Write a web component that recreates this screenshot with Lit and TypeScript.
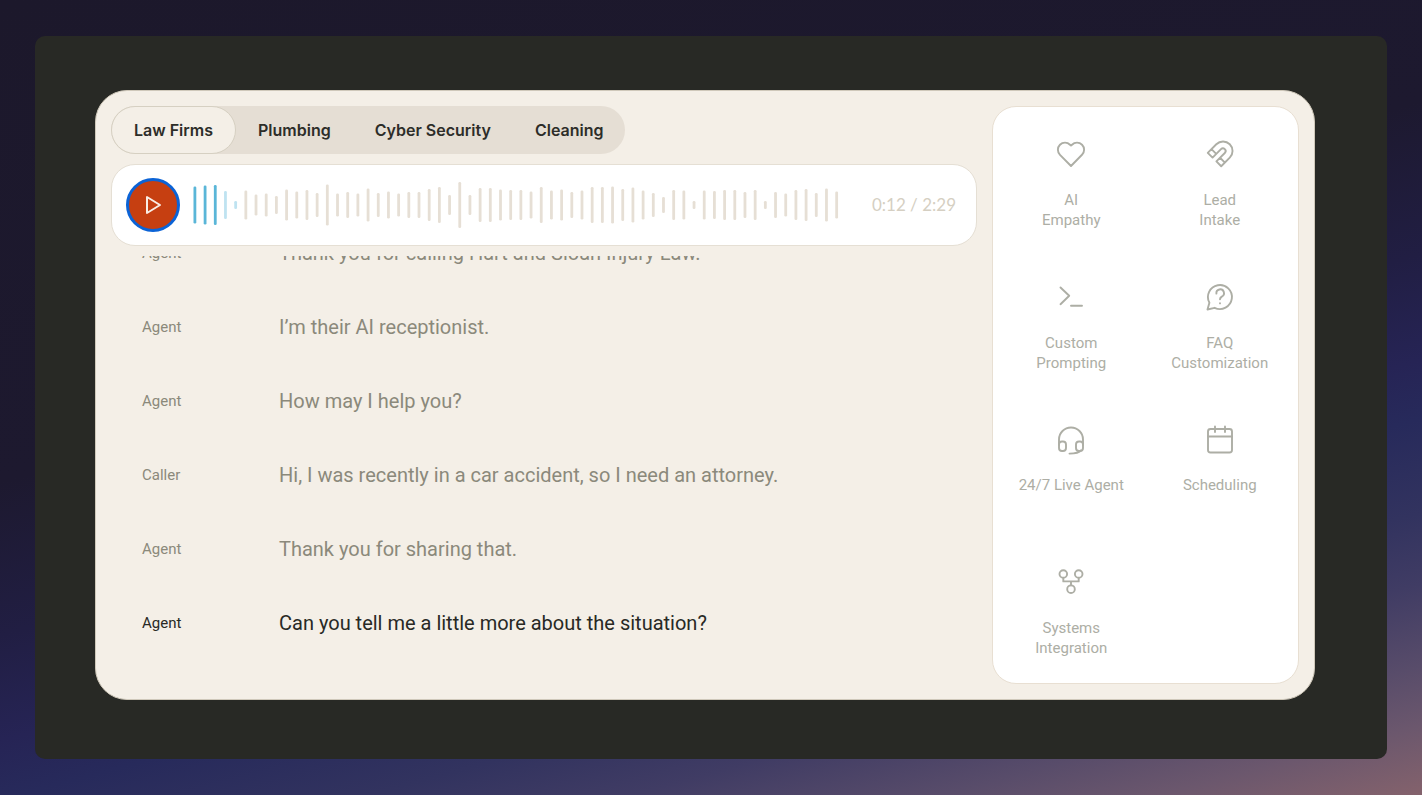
import { LitElement, html, css, svg } from "lit";
import { customElement, state } from "lit/decorators.js";
import { classMap } from "lit/directives/class-map.js";

const TABS = ["Law Firms", "Plumbing", "Cyber Security", "Cleaning"];

const LEVELS = [
  37, 39, 40, 28, 8, 29, 21, 23, 18, 31, 27, 30, 24, 41, 23, 26, 23, 33, 24, 27, 23, 26, 26, 32, 36, 20, 46, 20, 34, 34,
  31, 30, 30, 27, 36, 29, 31, 26, 29, 36, 36, 37, 32, 35, 29, 24, 16, 30, 29, 8, 29, 28, 30, 30, 26, 30, 8, 26, 23, 30,
  32, 24, 33, 27,
];

const LINES = [
  { who: "Agent", text: "Thank you for calling Hart and Sloan Injury Law." },
  { who: "Agent", text: "I’m their AI receptionist." },
  { who: "Agent", text: "How may I help you?" },
  { who: "Caller", text: "Hi, I was recently in a car accident, so I need an attorney." },
  { who: "Agent", text: "Thank you for sharing that." },
  { who: "Agent", text: "Can you tell me a little more about the situation?", current: true },
];

const FEATURES = [
  {
    label: ["AI", "Empathy"],
    icon: svg`<path d="M18 30 L7 18.8 A7.1 7.1 0 0 1 17 8.7 L18 9.6 L19 8.7 A7.1 7.1 0 0 1 29 18.8 Z"/>`,
  },
  {
    label: ["Lead", "Intake"],
    icon: svg`<g transform="rotate(45 18 18)"><path d="M8.5 25.8 V13.7 A9.5 9.5 0 0 1 27.5 13.7 V25.8 H20.7 V13.9 A2.7 2.7 0 0 0 15.3 13.9 V25.8 Z M8.5 20.6 H15.3 M20.7 20.6 H27.5"/></g>`,
  },
  {
    label: ["Custom", "Prompting"],
    icon: svg`<path d="M7.5 8.5 L16.2 16.8 L7.5 25.2 M18 26.7 H29"/>`,
  },
  {
    label: ["FAQ", "Customization"],
    icon: svg`<path d="M5.5 30.5 L7.4 23.8 A12 12 0 1 1 12.6 28.8 Z"/><path d="M14.4 14.6 A3.8 3.8 0 1 1 19.8 17.6 C18.6 18.4 18 18.9 18 20.2 M18 24.3 V24.4"/>`,
  },
  {
    label: ["24/7 Live Agent"],
    icon: svg`<path d="M6 24 V18.5 A12 12 0 0 1 30 18.5 V24"/><rect x="6" y="20.5" width="7" height="9.5" rx="3"/><rect x="23" y="20.5" width="7" height="9.5" rx="3"/><path d="M28 29.4 C26 32 23 32.6 16.5 32.6"/>`,
  },
  {
    label: ["Scheduling"],
    icon: svg`<rect x="6" y="8" width="24" height="23.5" rx="2.5"/><path d="M6 15.5 H30 M13 5.5 V11 M23 5.5 V11"/>`,
  },
  {
    label: ["Systems", "Integration"],
    icon: svg`<circle cx="10.3" cy="10" r="3.8"/><circle cx="25.7" cy="10" r="3.8"/><circle cx="18" cy="25.2" r="3.8"/><path d="M10.3 14 V17.4 H25.7 V14 M18 17.4 V21.3"/>`,
  },
];

@customElement("call-player")
export class CallPlayer extends LitElement {
  static styles = css`
    :host {
      display: flex;
      align-items: center;
      gap: 12px;
      padding: 13px 20px 13px 14px;
      background: #fff;
      border: 1px solid #e5dfd4;
      border-radius: 24px;
    }
    .play {
      flex: none;
      display: grid;
      place-items: center;
      box-sizing: border-box;
      width: 54px;
      height: 54px;
      padding: 0;
      border: 3px solid #0b63d6;
      border-radius: 50%;
      background: #c63f11;
      color: #f9ede4;
      cursor: pointer;
    }
    .wave {
      flex: 1;
      min-width: 0;
      height: 48px;
    }
    .bar {
      fill: #e6dfd5;
    }
    .played {
      fill: #5ab6d8;
    }
    .next {
      fill: #bfe3f1;
    }
    .time {
      margin-left: 16px;
      font: 400 17px/24px Lato, sans-serif;
      color: #d5cfc2;
    }
  `;

  render() {
    return html`
      <button class="play" type="button" aria-label="Play">
        <svg width="24" height="24" viewBox="0 0 24 24" fill="none" stroke="currentColor" stroke-width="2" stroke-linejoin="round" aria-hidden="true">
          <path d="M6 4 V20 L19 12 Z" />
        </svg>
      </button>
      <svg class="wave" aria-hidden="true">
        ${LEVELS.map(
          (h, i) => svg`<rect
            class=${classMap({ bar: true, played: i < 3, next: i === 3 || i === 4 })}
            x=${((i / LEVELS.length) * 100).toFixed(3) + "%"}
            y=${24 - h / 2}
            transform="translate(1.5 0)"
            width="2.8"
            height=${h}
            rx="1.3"
          />`
        )}
      </svg>
      <span class="time">0:12 / 2:29</span>
    `;
  }
}

@customElement("feature-panel")
export class FeaturePanel extends LitElement {
  static styles = css`
    :host {
      display: block;
      box-sizing: border-box;
      padding: 29px 4px 25px;
      background: #fff;
      border: 1px solid #e8dfd2;
      border-radius: 24px;
    }
    .grid {
      display: grid;
      grid-template-columns: 1fr 1fr;
      grid-template-rows: repeat(4, 1fr);
      row-gap: 48px;
      height: 100%;
      margin: 0;
      padding: 0;
      list-style: none;
    }
    .item {
      display: flex;
      flex-direction: column;
      align-items: center;
      gap: 18px;
      font-size: 15px;
      line-height: 20px;
      text-align: center;
      color: #adaea5;
    }
    .line {
      display: block;
    }
  `;

  render() {
    return html`
      <ul class="grid">
        ${FEATURES.map(
          (f) => html`<li class="item">
            <svg width="36" height="36" viewBox="0 0 36 36" fill="none" stroke="currentColor" stroke-width="1.9" stroke-linejoin="round" stroke-linecap="round" aria-hidden="true">
              ${f.icon}
            </svg>
            <span>${f.label.map((t) => html`<span class="line">${t}</span>`)}</span>
          </li>`
        )}
      </ul>
    `;
  }
}

@customElement("app-root")
export class AppRoot extends LitElement {
  static styles = css`
    :host {
      display: flex;
      box-sizing: border-box;
      min-height: 100vh;
      padding: 36px 35px;
      background: linear-gradient(
        165deg,
        #1c182b 0%,
        #1d192f 41%,
        #211e43 54%,
        #262455 63%,
        #272a5b 68%,
        #32335f 76%,
        #403c64 82%,
        #584c6a 89%,
        #6b576d 94%,
        #84626c 100%
      );
      font-family: Roboto, "Liberation Sans", sans-serif;
      color: #282925;
    }
    .frame {
      flex: 1;
      display: flex;
      min-width: 0;
      padding: 54px 72px 59px 60px;
      border-radius: 10px;
      background: #282925;
    }
    .card {
      flex: 1;
      display: grid;
      grid-template-columns: minmax(0, 1fr) 307px;
      gap: 15px;
      min-width: 0;
      padding: 15px;
      background: #f4efe7;
      border: 1px solid #cfc8ba;
      border-radius: 32px;
    }
    .main {
      display: flex;
      flex-direction: column;
      min-width: 0;
    }
    .tabs {
      display: flex;
      align-self: flex-start;
      border-radius: 24px;
      background: #e5ded4;
    }
    .tab {
      height: 48px;
      padding: 0 22px;
      border: 0;
      border-radius: 24px;
      background: none;
      font: 600 16px/24px Inter, sans-serif;
      color: #2d2d29;
      cursor: pointer;
    }
    .tab.on {
      border: 1px solid #d6d0c2;
      background: #f4efe7;
    }
    .player {
      margin: 10px 0;
    }
    .log {
      flex: 1 1 0;
      display: flex;
      flex-direction: column;
      justify-content: flex-end;
      min-height: 0;
      overflow: hidden;
      padding-bottom: 24px;
    }
    .row {
      flex: none;
      display: grid;
      grid-template-columns: 137px minmax(0, 1fr);
      align-items: center;
      padding: 23px 31px;
      color: #8b897b;
    }
    .row.current {
      color: #282925;
    }
    .who {
      font-size: 15px;
      line-height: 20px;
    }
    .text {
      margin: 0;
      font-size: 20px;
      line-height: 28px;
    }
  `;

  @state() private tab = 0;

  render() {
    return html`
      <main class="frame">
        <section class="card">
          <div class="main">
            <div class="tabs" role="tablist">
              ${TABS.map(
                (t, i) => html`<button
                  type="button"
                  role="tab"
                  aria-selected=${i === this.tab}
                  class=${classMap({ tab: true, on: i === this.tab })}
                  @click=${() => (this.tab = i)}
                >${t}</button>`
              )}
            </div>
            <call-player class="player"></call-player>
            <div class="log">
              ${LINES.map(
                (l) => html`<div class=${classMap({ row: true, current: !!l.current })}>
                  <span class="who">${l.who}</span>
                  <p class="text">${l.text}</p>
                </div>`
              )}
            </div>
          </div>
          <feature-panel></feature-panel>
        </section>
      </main>
    `;
  }
}
